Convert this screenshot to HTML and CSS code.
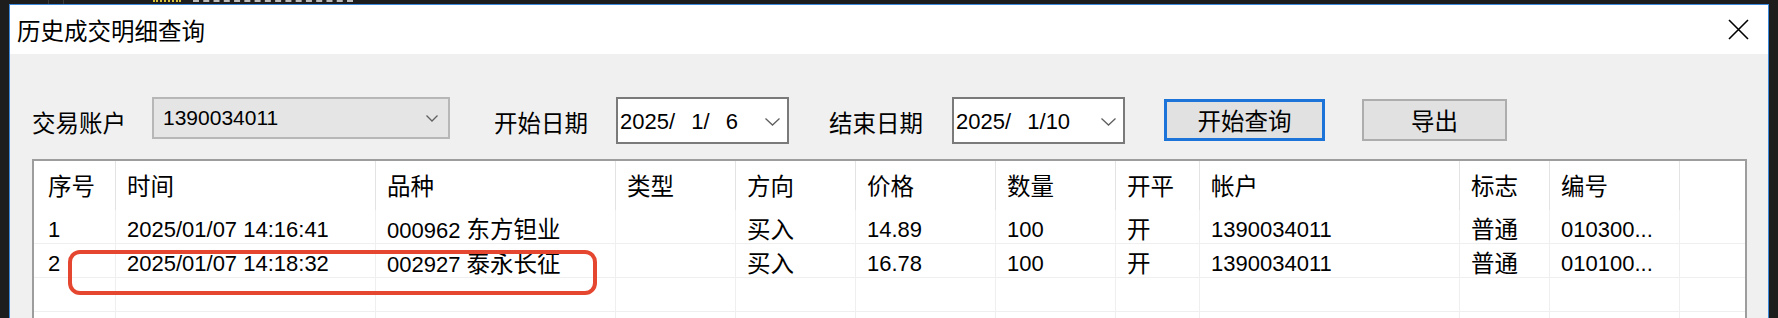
FILE: index.html
```html
<!DOCTYPE html>
<html lang="zh-CN">
<head>
  <meta charset="UTF-8">
  <title>历史成交明细查询</title>
  <link rel="stylesheet" href="styles.css">
</head>
<body>
  <!-- Desktop strip behind the dialog -->
  <div class="backdrop">
    <span class="bd-line"></span>
    <span class="bd-line"></span>
    <span class="bd-dots"></span>
    <span class="bd-text"></span>
  </div>

  <div class="window">
    <!-- Title bar -->
    <div class="titlebar">
      <span class="title cn">历史成交明细查询</span>
      <svg class="close" viewBox="0 0 21 21" width="21" height="21">
        <path d="M1 1 L20 20 M20 1 L1 20" stroke="#000" stroke-width="1.6" fill="none"/>
      </svg>
    </div>

    <div class="content">
      <!-- Query controls -->
      <div class="toolbar">
        <span class="field-label cn">交易账户</span>
        <div class="combo">
          <span>1390034011</span>
          <svg class="chevron" viewBox="0 0 12 7" width="12" height="7">
            <path d="M0.5 0.5 L6 6 L11.5 0.5" stroke="#606060" stroke-width="1.3" fill="none"/>
          </svg>
        </div>

        <span class="field-label cn gap-start">开始日期</span>
        <div class="datebox">
          <span class="date-text">2025/  1/  6</span>
          <svg class="chevron" viewBox="0 0 15 8" width="15" height="8">
            <path d="M0.5 0.5 L7.5 7 L14.5 0.5" stroke="#606060" stroke-width="1.3" fill="none"/>
          </svg>
        </div>

        <span class="field-label cn gap-end">结束日期</span>
        <div class="datebox datebox-end">
          <span class="date-text">2025/  1/10</span>
          <svg class="chevron" viewBox="0 0 15 8" width="15" height="8">
            <path d="M0.5 0.5 L7.5 7 L14.5 0.5" stroke="#606060" stroke-width="1.3" fill="none"/>
          </svg>
        </div>

        <button class="btn btn-primary cn">开始查询</button>
        <button class="btn btn-export cn">导出</button>
      </div>

      <!-- Trade list -->
      <div class="grid-wrap">
        <div class="grid">
          <div class="th first cn">序号</div>
          <div class="th cn">时间</div>
          <div class="th cn">品种</div>
          <div class="th cn">类型</div>
          <div class="th cn">方向</div>
          <div class="th cn">价格</div>
          <div class="th cn">数量</div>
          <div class="th cn">开平</div>
          <div class="th cn">帐户</div>
          <div class="th cn">标志</div>
          <div class="th cn">编号</div>
          <div class="th last"></div>

          <div class="td first">1</div>
          <div class="td">2025/01/07 14:16:41</div>
          <div class="td">000962 <span class="cn">东方钽业</span></div>
          <div class="td"></div>
          <div class="td cn">买入</div>
          <div class="td">14.89</div>
          <div class="td">100</div>
          <div class="td cn">开</div>
          <div class="td">1390034011</div>
          <div class="td cn">普通</div>
          <div class="td">010300...</div>
          <div class="td last"></div>

          <div class="td first">2</div>
          <div class="td">2025/01/07 14:18:32</div>
          <div class="td">002927 <span class="cn">泰永长征</span></div>
          <div class="td"></div>
          <div class="td cn">买入</div>
          <div class="td">16.78</div>
          <div class="td">100</div>
          <div class="td cn">开</div>
          <div class="td">1390034011</div>
          <div class="td cn">普通</div>
          <div class="td">010100...</div>
          <div class="td last"></div>

          <div class="td first"></div><div class="td"></div><div class="td"></div><div class="td"></div>
          <div class="td"></div><div class="td"></div><div class="td"></div><div class="td"></div>
          <div class="td"></div><div class="td"></div><div class="td"></div><div class="td last"></div>

          <div class="td first"></div><div class="td"></div><div class="td"></div><div class="td"></div>
          <div class="td"></div><div class="td"></div><div class="td"></div><div class="td"></div>
          <div class="td"></div><div class="td"></div><div class="td"></div><div class="td last"></div>
        </div>
        <!-- highlight annotation over row 2 -->
        <div class="mark"></div>
      </div>
    </div>
  </div>
</body>
</html>
```

FILE: styles.css
```css
/* Basic reset */
* {
  box-sizing: border-box;
}
body {
  margin: 0;
  height: 318px;
  overflow: hidden;
  background: #1d1d1d;
  font-family: "Liberation Sans", "Noto Sans CJK SC", sans-serif;
  font-size: 22px;
  color: #000;
}
.cn {
  font-size: 23.5px;
}
/* Strip of the window behind */
.backdrop {
  height: 4px;
  display: flex;
  align-items: flex-start;
  overflow: hidden;
}
.bd-line {
  width: 1px;
  height: 4px;
  background: #3a3a3a;
  margin-left: 48px;
}
.bd-line + .bd-line {
  margin-left: 14px;
}
.bd-dots {
  width: 28px;
  height: 2px;
  margin-left: 89px;
  border-bottom: 2px dotted #d8c23a;
}
.bd-text {
  width: 160px;
  height: 2px;
  margin-left: 12px;
  border-bottom: 2px dashed #bdbdbd;
}
/* Dialog window */
.window {
  margin-left: 9px;
  width: 1760px;
  height: 314px;
  border: 1px solid #3b88da;
  border-bottom: 0;
  background: #f0f0f0;
}
.titlebar {
  height: 49px;
  background: #fff;
  display: flex;
  align-items: center;
  padding-left: 7px;
}
.close {
  margin-left: auto;
  margin-right: 19px;
}
/* Controls row */
.toolbar {
  height: 90px;
  padding: 43px 0 0 22px;
  display: flex;
  align-items: flex-start;
}
.field-label {
  width: 94px;
  margin-top: 13px;
  line-height: 28px;
  white-space: nowrap;
}
.gap-start {
  margin-left: 44px;
}
.gap-end {
  margin-left: 40px;
}
.combo {
  margin-left: 26px;
  width: 298px;
  height: 42px;
  border: 2px solid #b7b7b7;
  background: #e5e5e5;
  display: flex;
  align-items: center;
  padding: 0 10px 0 9px;
  font-size: 21px;
}
.chevron {
  margin-left: auto;
}
.datebox {
  margin-left: 28px;
  width: 173px;
  height: 47px;
  border: 2px solid #7a7a7a;
  background: #fff;
  display: flex;
  align-items: center;
  padding: 2px 7px 0 2px;
  font-size: 22px;
}
.datebox-end {
  margin-left: 29px;
}
.date-text {
  white-space: pre;
  word-spacing: 2px;
}
.btn {
  height: 42px;
  margin-top: 2px;
  background: #e1e1e1;
  border: 2px solid #adadad;
  font-family: inherit;
  color: #000;
  padding: 0;
}
.btn-primary {
  margin-left: 39px;
  width: 161px;
  border: 3px solid #1c74d8;
}
.btn-export {
  margin-left: 37px;
  width: 145px;
}
/* Trade grid */
.grid-wrap {
  position: relative;
  margin: 15px 0 0 22px;
  width: 1715px;
  height: 200px;
  border: 2px solid #9d9d9d;
  border-bottom: 0;
  background: #fff;
  overflow: hidden;
}
.grid {
  display: grid;
  grid-template-columns: 82px 260px 240px 120px 120px 140px 120px 84px 260px 90px 130px 1fr;
  grid-template-rows: 49px;
  grid-auto-rows: 34px;
}
.th {
  border-right: 1px solid #e3e3e3;
  padding: 12px 0 0 11px;
  line-height: 28px;
  white-space: nowrap;
}
.td {
  border-right: 1px solid #efefef;
  border-bottom: 1px solid #efefef;
  padding: 6px 0 0 11px;
  line-height: 28px;
  white-space: nowrap;
}
.first {
  padding-left: 14px;
}
.last {
  border-right: 0;
}
.mark {
  position: absolute;
  left: 34px;
  top: 89px;
  width: 529px;
  height: 45px;
  border: 4px solid #e5462f;
  border-radius: 12px;
}
```
